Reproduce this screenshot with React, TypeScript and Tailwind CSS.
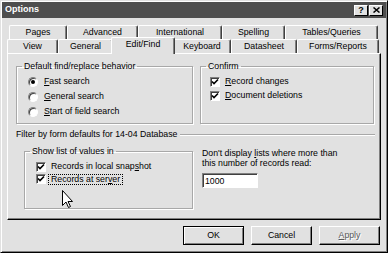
import React from "react";

const font = { fontFamily: '"Liberation Sans", Arial, sans-serif' };

function Radio({ checked }: { checked?: boolean }) {
  return (
    <span className="relative inline-flex w-[10px] h-[10px] rounded-full bg-white border border-t-[#808080] border-l-[#808080] border-r-white border-b-white shadow-[inset_1px_1px_0_#404040] items-center justify-center">
      {checked && <span className="w-[4px] h-[4px] rounded-full bg-black" />}
    </span>
  );
}

function Check({ checked }: { checked?: boolean }) {
  return (
    <span className="inline-flex w-[10px] h-[10px] bg-white border border-t-[#808080] border-l-[#808080] border-r-white border-b-white shadow-[inset_1px_1px_0_#404040] items-center justify-center">
      {checked && (
        <svg width="8" height="8" viewBox="0 0 8 8">
          <path d="M1 3.5 L3 5.5 L7 1.5" stroke="#000" strokeWidth="1.6" fill="none" />
        </svg>
      )}
    </span>
  );
}

function Group({ title, className, children }: { title: string; className?: string; children?: React.ReactNode }) {
  return (
    <fieldset className={"border border-[#a8a8a8] shadow-[1px_1px_0_#fff,inset_1px_1px_0_#fff] " + (className ?? "")}>
      <legend className="ml-[5px] px-[2px] leading-[10px]">{title}</legend>
      {children}
    </fieldset>
  );
}

function Tab({ label, w, selected }: { label: string; w: string; selected?: boolean }) {
  return (
    <div
      className={
        "flex items-center justify-center border-l border-t border-l-white border-t-white border-r border-r-[#404040] rounded-t-[2px] shadow-[inset_-1px_0_0_#808080] " +
        w +
        (selected ? " h-[17px] -mt-[2px] -mx-[2px] relative z-10 bg-[#e1e1e1] pb-[2px]" : " h-[14px]")
      }
    >
      {label}
    </div>
  );
}

function Btn({ children, def, dim }: { children: React.ReactNode; def?: boolean; dim?: boolean }) {
  return (
    <div
      className={
        "w-[61px] h-[19px] flex items-center justify-center border " +
        (def
          ? "border-black shadow-[inset_1px_1px_0_#fff,inset_-1px_-1px_0_#808080]"
          : "border-t-white border-l-white border-r-black border-b-black shadow-[inset_-1px_-1px_0_#808080]") +
        (dim ? " text-[#5a5a5a] [text-shadow:1px_1px_0_#fff]" : "")
      }
    >
      {children}
    </div>
  );
}

export default function App() {
  return (
    <div
      style={font}
      className="relative w-[388px] h-[253px] bg-[#e1e1e1] text-[8.75px] text-black border border-t-[#e1e1e1] border-l-[#e1e1e1] border-r-black border-b-black shadow-[inset_1px_1px_0_#fff,inset_-1px_-1px_0_#808080] flex flex-col overflow-hidden select-none"
    >
      {/* Title bar */}
      <div className="mx-[1px] mt-[1px] h-[16px] bg-[#4e4e4e] flex items-center pl-[3px] pr-[3px]">
        <span className="text-white font-bold text-[9px] flex-1">Options</span>
        <div className="flex gap-[1px]">
          <div className="w-[14px] h-[11px] bg-[#e1e1e1] border border-t-white border-l-white border-r-black border-b-black flex items-center justify-center font-bold text-[9px] leading-none">
            ?
          </div>
          <div className="w-[14px] h-[11px] bg-[#e1e1e1] border border-t-white border-l-white border-r-black border-b-black flex items-center justify-center">
            <svg width="7" height="6" viewBox="0 0 7 6">
              <path d="M0.5 0.5 L6.5 5.5 M6.5 0.5 L0.5 5.5" stroke="#000" strokeWidth="1.5" />
            </svg>
          </div>
        </div>
      </div>

      {/* Tabs */}
      <div className="mt-[7px] flex pl-[8px]">
        <Tab label="Pages" w="w-[58px]" />
        <Tab label="Advanced" w="w-[71px]" />
        <Tab label="International" w="w-[84px]" />
        <Tab label="Spelling" w="w-[63px]" />
        <Tab label="Tables/Queries" w="w-[93px]" />
      </div>
      <div className="flex pl-[6px] h-[14px]">
        <Tab label="View" w="w-[51px]" />
        <Tab label="General" w="w-[55px]" />
        <Tab label="Edit/Find" w="w-[64px]" selected />
        <Tab label="Keyboard" w="w-[58px]" />
        <Tab label="Datasheet" w="w-[66px]" />
        <Tab label="Forms/Reports" w="w-[82px]" />
      </div>

      {/* Panel */}
      <div className="ml-[6px] w-[374px] h-[167px] border border-t-white border-l-white border-r-black border-b-black shadow-[inset_-1px_-1px_0_#808080] pl-[8px] pt-[7px]">
        <div className="flex gap-[7px]">
          <Group title="Default find/replace behavior" className="w-[177px] h-[63px]">
            <div className="flex flex-col gap-[5px] pl-[11px] pt-[6px]">
              <label className="flex items-center gap-[6px] h-[10px]">
                <Radio checked />
                <span>
                  <u>F</u>ast search
                </span>
              </label>
              <label className="flex items-center gap-[6px] h-[10px]">
                <Radio />
                <span>
                  <u>G</u>eneral search
                </span>
              </label>
              <label className="flex items-center gap-[6px] h-[10px]">
                <Radio />
                <span>
                  <u>S</u>tart of field search
                </span>
              </label>
            </div>
          </Group>
          <Group title="Confirm" className="w-[174px] h-[63px]">
            <div className="flex flex-col gap-[4px] pl-[9px] pt-[6px]">
              <label className="flex items-center gap-[5px] h-[10px]">
                <Check checked />
                <span>
                  <u>R</u>ecord changes
                </span>
              </label>
              <label className="flex items-center gap-[5px] h-[10px]">
                <Check checked />
                <span>
                  <u>D</u>ocument deletions
                </span>
              </label>
            </div>
          </Group>
        </div>

        {/* Filter by form */}
        <div className="flex items-center mt-[6px] pr-[5px] h-[10px]">
          <span className="pr-[3px]">Filter by form defaults for 14-04 Database</span>
          <div className="flex-1 h-[2px] border-t border-t-[#a8a8a8] border-b border-b-white" />
        </div>

        <div className="flex mt-[6px]">
          <Group title="Show list of values in" className="ml-[8px] w-[169px] h-[63px]">
            <div className="flex flex-col gap-[2px] pl-[11px] pt-[6px]">
              <label className="flex items-center gap-[5px] h-[10px]">
                <Check checked />
                <span>
                  Records in local snap<u>s</u>hot
                </span>
              </label>
              <label className="flex items-center gap-[3px] h-[10px]">
                <Check checked />
                <span className="outline outline-1 outline-dotted outline-black px-[2px] leading-[9px]">
                  Records at ser<u>v</u>er
                </span>
              </label>
            </div>
          </Group>
          <div className="ml-[9px] pt-[2px] leading-[10px]">
            <div>
              Don't display <u>l</u>ists where more than
            </div>
            <div>this number of records read:</div>
            <div className="mt-[5px] w-[56px] h-[15px] bg-white border border-t-[#808080] border-l-[#808080] border-r-white border-b-white shadow-[inset_1px_1px_0_#404040] pl-[2px] flex items-center">
              1000
            </div>
          </div>
        </div>
      </div>

      {/* Buttons */}
      <div className="flex justify-end gap-[7px] pr-[7px] mt-[6px]">
        <Btn def>OK</Btn>
        <Btn>Cancel</Btn>
        <Btn dim>
          <span>
            <u>A</u>pply
          </span>
        </Btn>
      </div>

      {/* Mouse cursor */}
      <svg className="absolute left-[61px] top-[189px]" width="12" height="19" viewBox="0 0 12 19">
        <path d="M0.5 0.5 L0.5 15.5 L4 12 L6.5 17.5 L8.5 16.5 L6 11.5 L10.5 11.5 Z" fill="#fff" stroke="#000" strokeWidth="1" />
      </svg>
    </div>
  );
}
